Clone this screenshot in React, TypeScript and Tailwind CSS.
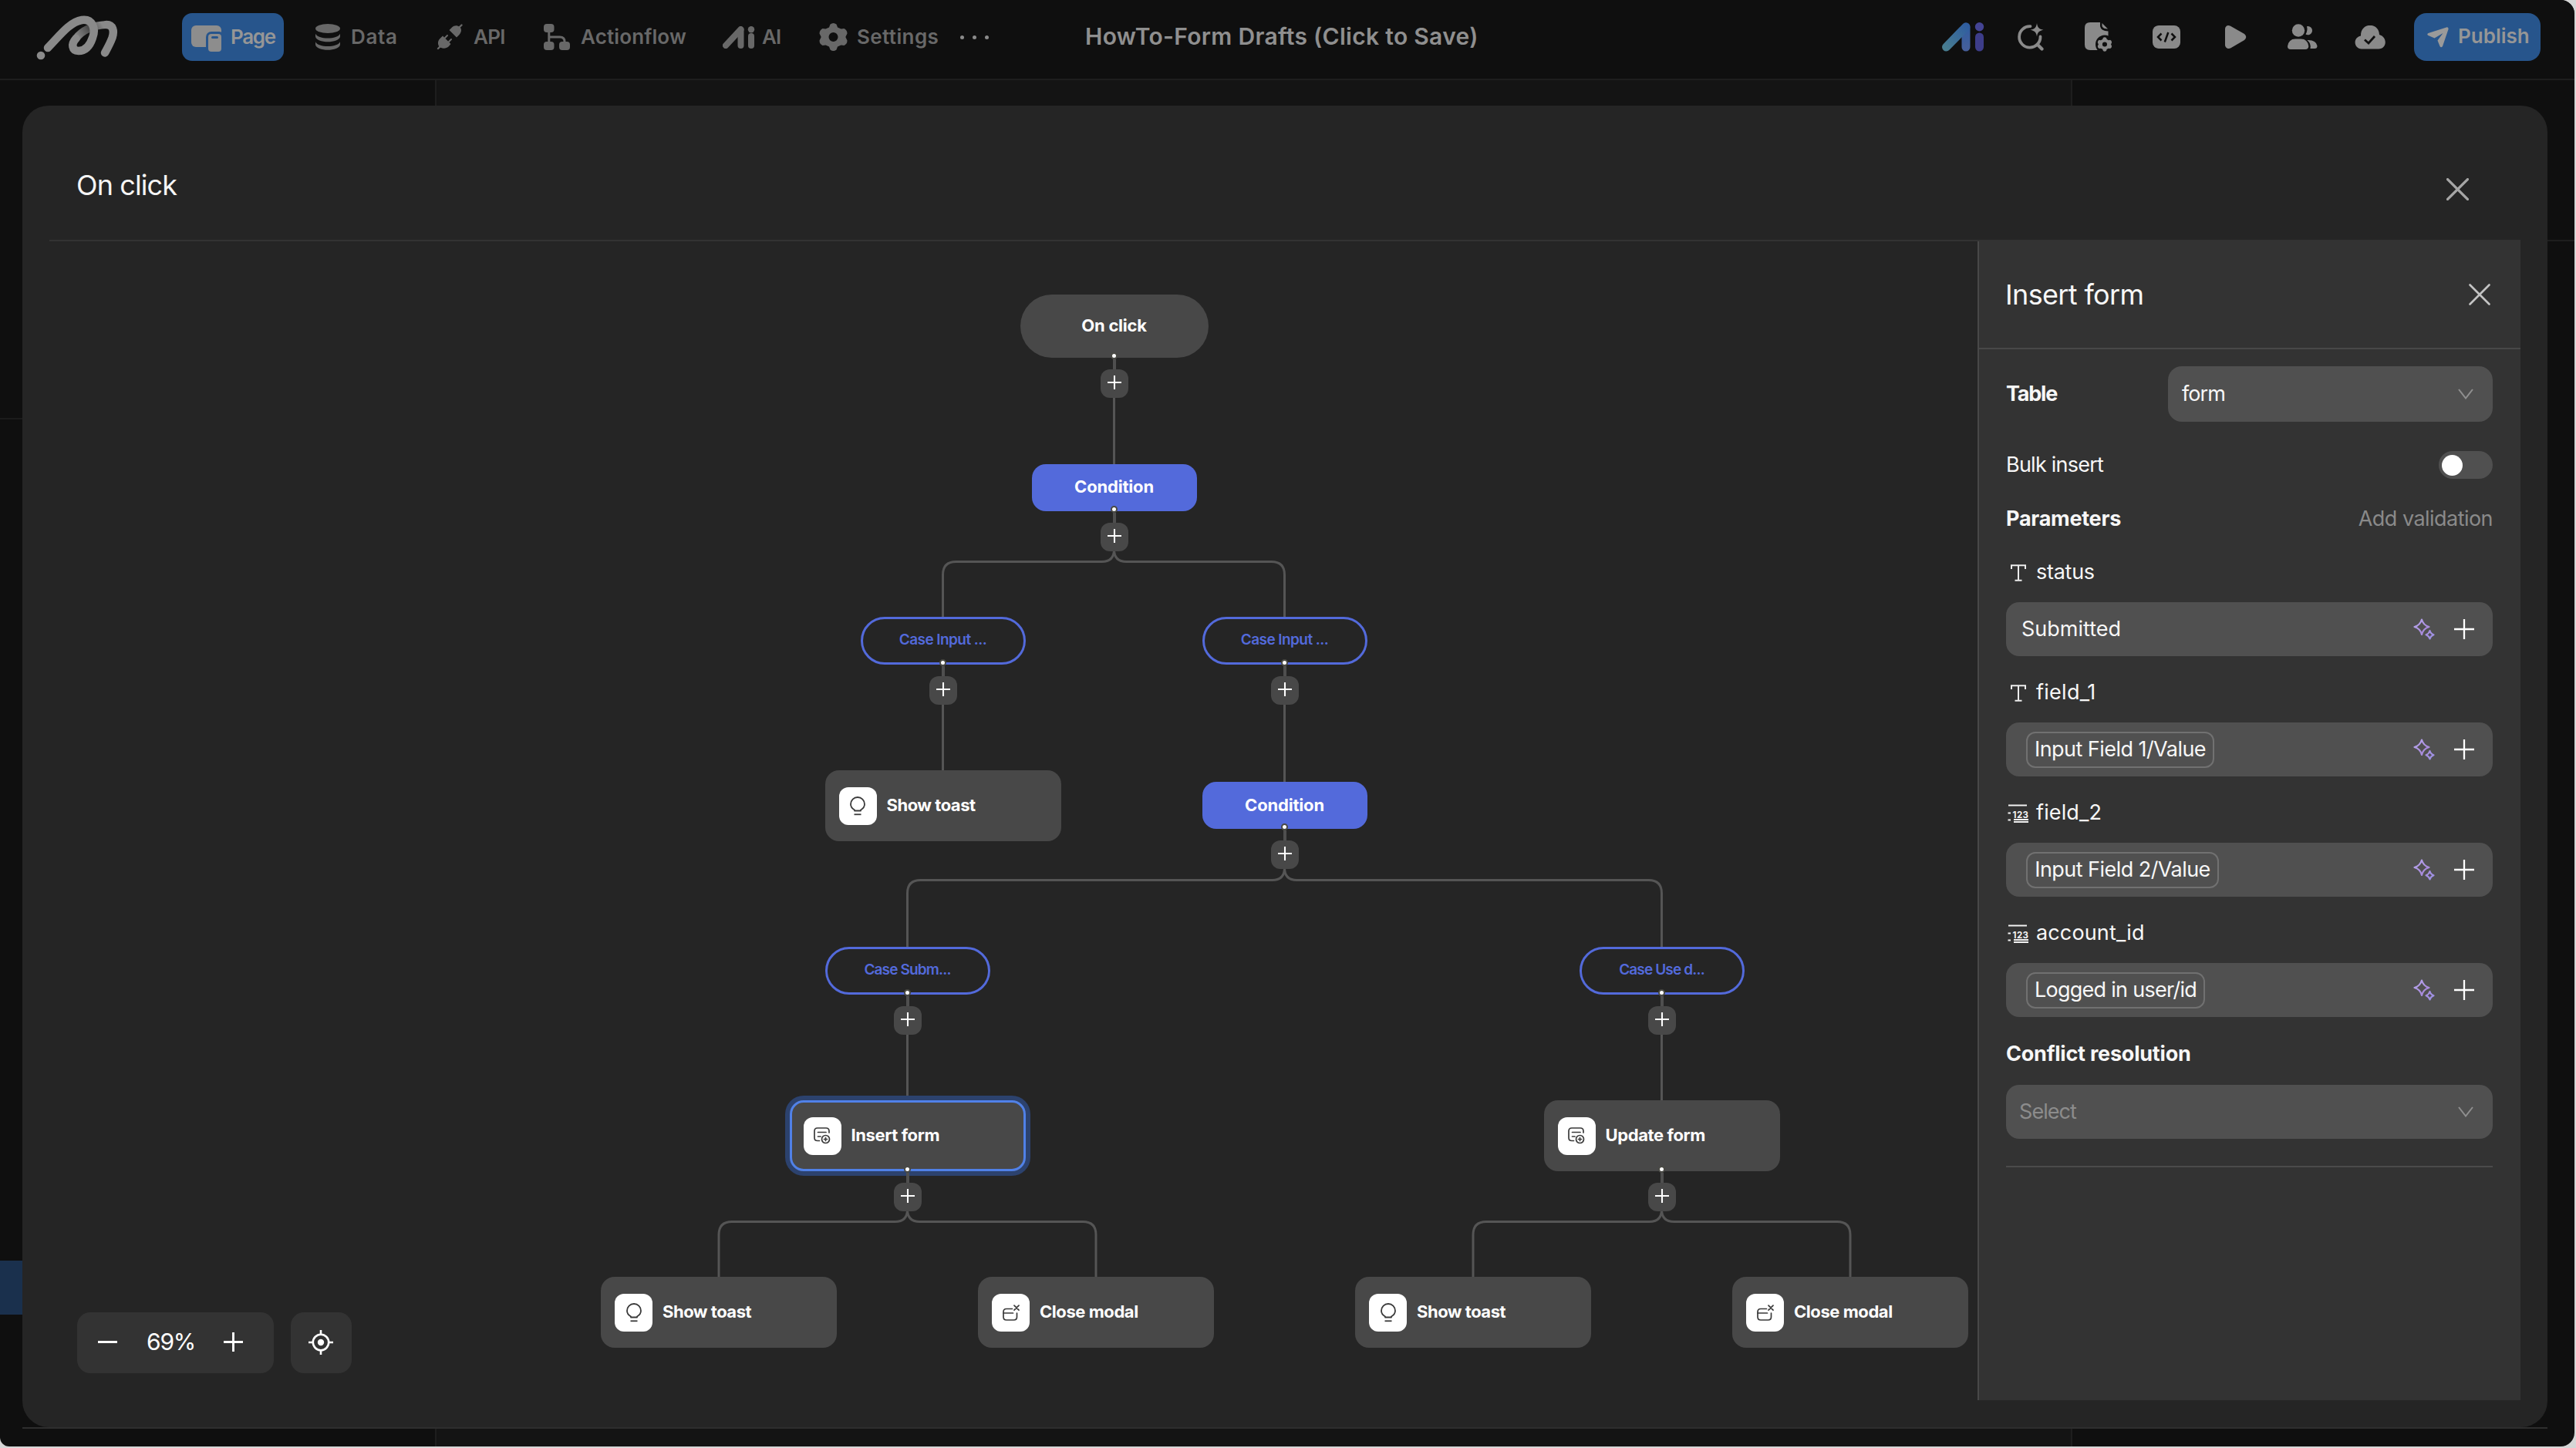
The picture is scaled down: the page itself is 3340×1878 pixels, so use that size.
import type { ReactNode } from "react";

/* ---------- Icons ---------- */

function LogoIcon() {
  return (
    <svg className="block h-[70px] w-[120px]" viewBox="40 12 120 70" fill="none" strokeLinecap="round" strokeLinejoin="round">
      <defs>
        <linearGradient id="fold" gradientUnits="userSpaceOnUse" x1="100" y1="50" x2="132" y2="30">
          <stop offset="0" stopColor="#8a8a8a" />
          <stop offset="0.55" stopColor="#4a4a4a" />
          <stop offset="1" stopColor="#8a8a8a" />
        </linearGradient>
      </defs>
      <path d="M98.5 49 C106 39 120 32 138 31" stroke="url(#fold)" strokeWidth="10" />
      <path d="M138 31 C146.500 31 148.500 39 145.500 48 C142.500 56 139 62 136 67.500" stroke="#8a8a8a" strokeWidth="10.500" />
      <path d="M62 61 C76 47 90 27.500 106 25 C120 23 124.500 36 120 48 C116 60 110 65 102 65 C93 64.500 92 56 98.500 49" stroke="#8a8a8a" strokeWidth="10.500" />
      <circle cx="53" cy="71" r="5.300" fill="#8a8a8a" />
    </svg>
  );
}

function PageIcon() {
  return (
    <svg className="block h-[34px] w-[39px] shrink-0" viewBox="0 0 39 34">
      <rect x="0" y="0" width="39" height="28" rx="6" fill="#8d8d8d" />
      <rect x="19" y="8" width="24" height="30" rx="7" fill="#27558c" />
      <rect x="22" y="11" width="17" height="23" rx="4" fill="#8d8d8d" />
      <rect x="26" y="14" width="9" height="3" rx="1.500" fill="#27558c" />
    </svg>
  );
}

function DataIcon() {
  return (
    <svg className="block h-[34px] w-[32px]" viewBox="0 0 32 34" fill="#686868">
      <ellipse cx="16" cy="6" rx="16" ry="6" />
      <path d="M0 11 C3 20 29 20 32 11 V15 C31 26 1 26 0 15 Z" transform="translate(0 3.500) scale(1 0.850)" />
      <path d="M0 11 C3 20 29 20 32 11 V15 C31 26 1 26 0 15 Z" transform="translate(0 14) scale(1 0.850)" />
    </svg>
  );
}

function ApiIcon() {
  return (
    <svg className="block h-[34px] w-[34px]" viewBox="0 0 34 34" fill="#686868" stroke="#686868" strokeLinecap="round" strokeWidth="2.400">
      <path d="M2 32 L7 27 M32.500 1.500 L28 6" />
      <path d="M11 18 L14 15 M16 23 L19 20" strokeWidth="2" />
      <path stroke="none" d="M8 15.500 L18.500 26 L16 29 C12 33 6 32 3.500 29.500 C1 26 1.500 21.500 5 18.500 Z" />
      <path stroke="none" d="M16.500 8 L26 17.500 L29.500 14 C33 10 32.500 6 30 4 C27 1.500 23 1.500 20 4.500 Z" />
    </svg>
  );
}

function FlowIcon() {
  return (
    <svg className="block h-[34px] w-[34px]" viewBox="0 0 34 34" fill="#686868">
      <rect x="0" y="0" width="13.500" height="11" rx="4" />
      <rect x="0" y="23" width="13.500" height="11" rx="4" />
      <rect x="20" y="23" width="14" height="11" rx="4" />
      <path d="M6.800 9 V25 M6.800 17 H21 Q27 17 27 23 V25" fill="none" stroke="#686868" strokeWidth="3" />
    </svg>
  );
}

function AiIcon() {
  return (
    <svg className="block h-[29px] w-[42px]" viewBox="0 0 42 29" stroke="#686868" fill="none" strokeLinecap="round">
      <path d="M4 25 L23.500 4" strokeWidth="8" />
      <path d="M23.500 5 V25" strokeWidth="8" />
      <path d="M37 13 V25" strokeWidth="8" />
      <circle cx="37" cy="4.200" r="4.200" fill="#686868" stroke="none" />
    </svg>
  );
}

function AiColorIcon() {
  return (
    <svg className="block h-[38px] w-[55px]" viewBox="0 0 55 38" fill="none" strokeLinecap="round">
      <defs>
        <linearGradient id="aiSlash" gradientUnits="userSpaceOnUse" x1="4" y1="34" x2="33" y2="4">
          <stop offset="0" stopColor="#487d90" />
          <stop offset="1" stopColor="#2f5da0" />
        </linearGradient>
        <linearGradient id="aiStem" gradientUnits="userSpaceOnUse" x1="31" y1="4" x2="31" y2="36">
          <stop offset="0" stopColor="#2f5da0" />
          <stop offset="1" stopColor="#465f9a" />
        </linearGradient>
      </defs>
      <rect x="25.500" y="1.500" width="11" height="36" rx="5.500" fill="url(#aiStem)" />
      <path d="M5.500 32 L31 5.800" stroke="url(#aiSlash)" strokeWidth="11" />
      <path d="M48.500 19 V32" stroke="#3d3d8a" strokeWidth="11" />
      <circle cx="48.500" cy="5.700" r="5.700" fill="#444494" />
    </svg>
  );
}

const GEAR =
  "M14.500 1.500 Q18.500 -1.500 22.500 1.500 L24 5.500 L28.500 7.500 L32.500 7 Q36.500 9 36.500 13.500 L34.500 17.500 L34.500 18.500 L36.500 22.500 Q36.500 27 32.500 29 L28.500 28.500 L24 30.500 L22.500 34.500 Q18.500 37.500 14.500 34.500 L13 30.500 L8.500 28.500 L4.500 29 Q0.500 27 0.500 22.500 L2.500 18.500 L2.500 17.500 L0.500 13.500 Q0.500 9 4.500 7 L8.500 7.500 L13 5.500 Z M18.500 12 A6 6 0 1 0 18.500 24 A6 6 0 1 0 18.500 12 Z";

function GearIcon() {
  return (
    <svg className="block h-[36px] w-[37px]" viewBox="0 0 37 36" fill="#686868" fillRule="evenodd">
      <path d={GEAR} />
    </svg>
  );
}

function SearchSparkIcon() {
  return (
    <svg className="block h-[36px] w-[36px]" viewBox="0 0 36 36" fill="none" stroke="#8a8a8a" strokeWidth="3.800" strokeLinecap="round">
      <path d="M17.500 4.200 A13.700 13.700 0 1 0 30.500 17.500" />
      <path d="M27 28 L32.500 33.500" strokeWidth="4.200" />
      <path d="M26 0 C26.900 5.600 28.400 7.500 34.500 8.800 C28.400 10.100 26.900 12 26 17.500 C25.100 12 23.600 10.100 17.500 8.800 C23.600 7.500 25.100 5.600 26 0 Z" fill="#8a8a8a" stroke="none" />
    </svg>
  );
}

function FileGearIcon() {
  return (
    <svg className="block h-[38px] w-[36px]" viewBox="0 0 36 38">
      <path d="M7 0 H20 V5 Q21 11 30.500 11.500 V36 H7 Q0 36 0 29 V7 Q0 0 7 0 Z" fill="#8a8a8a" />
      <path d="M22.500 1 L30 8.500 Q24 8.500 22.500 5 Z" fill="#8a8a8a" />
      <circle cx="26" cy="28.500" r="12" fill="#0f0f0f" />
      <g transform="translate(16.500 19.300) scale(0.510)">
        <path d={GEAR} fill="#8a8a8a" fillRule="evenodd" />
      </g>
    </svg>
  );
}

function CodeIcon() {
  return (
    <svg className="block h-[30px] w-[36px]" viewBox="0 0 36 30">
      <rect width="36" height="30" rx="8" fill="#8a8a8a" />
      <path d="M11.500 10.500 L7 15 L11.500 19.500 M24.500 10.500 L29 15 L24.500 19.500 M20.300 9 L15.800 21.500" fill="none" stroke="#0f0f0f" strokeWidth="2.500" />
    </svg>
  );
}

function PlayIcon() {
  return (
    <svg className="ml-[4px] block h-[30px] w-[28px]" viewBox="0 0 28 30">
      <path d="M0 4 Q1.500 -1.500 7 0.800 L25 11 Q29.500 15 25 19 L7 29.500 Q1.500 31.500 0 26 Z" fill="#8a8a8a" />
    </svg>
  );
}

function UsersIcon() {
  return (
    <svg className="block h-[34px] w-[39px]" viewBox="0 0 39 34" fill="#8a8a8a">
      <circle cx="14" cy="8.500" r="8.200" />
      <path d="M25 3.300 A5.600 5.600 0 1 1 23.500 13.500 Q26.500 8.500 25 3.300 Z" />
      <path d="M0 29 Q1.500 19.500 10 19.500 H17.500 Q26 19.500 27.300 29 Q27 33 23 33 H4 Q0 33 0 29 Z" />
      <path d="M25.500 21 Q37 20.500 38.500 28.500 Q38.500 32 35 32 H29.500 Q31 26 25.500 21 Z" />
    </svg>
  );
}

function CloudIcon() {
  return (
    <svg className="block h-[31px] w-[40px]" viewBox="0 0 40 31">
      <path d="M9 30.500 C-1 30.500 -3 16 8 13.500 C7.500 -4.500 31.500 -4.500 32 12 C43 15 42 30.500 31 30.500 Z" fill="#8a8a8a" />
      <path d="M13 18.500 L18 23 L26 14" fill="none" stroke="#0f0f0f" strokeWidth="2.800" />
    </svg>
  );
}

function SendIcon() {
  return (
    <svg className="block h-[27px] w-[28px] shrink-0" viewBox="0 0 28 27">
      <path d="M1.500 8 L25 0.400 Q28 0 27.500 3 L20 25 Q18 27.500 16.500 25 L13.500 17.500 L20.500 8 L9.500 14.500 L1.500 11 Q-1 9.500 1.500 8 Z" fill="#9a9a9a" />
    </svg>
  );
}

function CloseIcon({ className }: { className: string }) {
  return (
    <svg className={className} viewBox="0 0 28 28" fill="none" stroke="currentColor" strokeLinecap="round">
      <path d="M1.500 1.500 L26.500 26.500 M26.500 1.500 L1.500 26.500" />
    </svg>
  );
}

function ChevronIcon() {
  return (
    <svg className="block h-[14px] w-[20px]" viewBox="0 0 20 14" fill="none" stroke="#8f8f8f" strokeWidth="2">
      <path d="M1 1 L10 12.500 L19 1" />
    </svg>
  );
}

function SparklesIcon() {
  return (
    <svg className="block h-[28px] w-[28px]" viewBox="0 0 28 28" fill="none" strokeWidth="2.200" strokeLinejoin="round">
      <defs>
        <linearGradient id="spark" gradientUnits="userSpaceOnUse" x1="2" y1="0" x2="28" y2="28">
          <stop offset="0" stopColor="#b9aaf0" />
          <stop offset="0.500" stopColor="#a98bdc" />
          <stop offset="1" stopColor="#9a94e6" />
        </linearGradient>
      </defs>
      <path d="M11 1.500 Q13 9 20.500 11 Q13 13 11 21 Q9 13 1.500 11 Q9 9 11 1.500 Z" stroke="url(#spark)" />
      <path d="M21.500 16 Q22.500 20 26.500 21.200 Q22.500 22.500 21.500 26.500 Q20.300 22.500 16.500 21.200 Q20.300 20 21.500 16 Z" stroke="url(#spark)" />
    </svg>
  );
}

function PlusIcon({ className }: { className: string }) {
  return (
    <svg className={className} viewBox="0 0 26 26" fill="none" stroke="#ffffff">
      <path d="M13 0 V26 M0 13 H26" />
    </svg>
  );
}

function TextTypeIcon() {
  return (
    <svg className="block h-[22px] w-[20px]" viewBox="0 0 20 22" fill="none" stroke="#ececec" strokeWidth="2">
      <path d="M1 6 V1.200 H19 V6 M10 1.200 V20.800 M5.500 20.800 H14.500" />
    </svg>
  );
}

function NumberTypeIcon() {
  return (
    <svg className="block h-[24px] w-[28px]" viewBox="0 0 28 24" fill="none" stroke="#f2f2f2" strokeWidth="2">
      <path d="M1 1.500 H25 M0.500 11.500 H4 M0.500 20.500 H4 M8 20 H27 M8 23 H27" strokeWidth="1.800" />
      <text x="6.500" y="18" fontSize="11.500" fontWeight="700" fill="#f2f2f2" stroke="none" textLength="20.500">
        123
      </text>
    </svg>
  );
}

function BulbIcon() {
  return (
    <svg className="block h-[25px] w-[20px]" viewBox="0 0 20 25" fill="none" stroke="#3a3a3a" strokeWidth="1.800">
      <path d="M6 18.500 V17.500 C2.500 15.500 1 13 1 10 A9 9 0 0 1 19 10 C19 13 17.500 15.500 14 17.500 V18.500 Z" strokeLinejoin="round" />
      <path d="M5.500 23.300 H14.500" strokeWidth="1.800" />
    </svg>
  );
}

function FormAddIcon() {
  return (
    <svg className="block h-[22px] w-[22px]" viewBox="0 0 22 22" fill="none" stroke="#3a3a3a" strokeWidth="1.700" strokeLinecap="round">
      <path d="M7.500 17.500 H5 Q1 17.500 1 13.500 V5 Q1 1 5 1 H16 Q20 1 20 5 V7" />
      <path d="M5.500 6.500 H16 M5.500 12 H9" />
      <circle cx="15.500" cy="15.500" r="5" />
      <path d="M15.500 13.500 V17.500 M13.500 15.500 H17.500" />
    </svg>
  );
}

function ModalCloseIcon() {
  return (
    <svg className="block h-[21px] w-[22px]" viewBox="0 0 22 21" fill="none" stroke="#3a3a3a" strokeWidth="1.700" strokeLinecap="round">
      <path d="M12.500 5.500 H5 Q1 5.500 1 9.500 V16 Q1 20 5 20 H14.500 Q18.500 20 18.500 16 V11" />
      <path d="M1 11 H13.500" />
      <path d="M15 1.200 L21 7.200 M21 1.200 L15 7.200" />
    </svg>
  );
}

function LocateIcon() {
  return (
    <svg className="block h-[32px] w-[32px]" viewBox="0 0 32 32" fill="none" stroke="#ffffff" strokeWidth="2.600">
      <circle cx="16" cy="16" r="10.200" />
      <circle cx="16" cy="16" r="4.200" fill="#ffffff" stroke="none" />
      <path d="M16 0 V6 M16 26 V32 M0 16 H6 M26 16 H32" />
    </svg>
  );
}

/* ---------- Header ---------- */

function NavItem({ width, gap, icon, label, className }: { width: string; gap: string; icon: ReactNode; label: string; className?: string }) {
  return (
    <div className={`flex shrink-0 items-center ${width} ${gap}`}>
      {icon}
      <span className={`mt-[-2px] ${className}`}>{label}</span>
    </div>
  );
}

function Tool({ children }: { children: ReactNode }) {
  return <div className="flex w-[88px] shrink-0 items-center justify-center">{children}</div>;
}

function Header() {
  return (
    <header className="flex h-[104px] shrink-0 border-b-2 border-[#1e1e1e] bg-[#0f0f0f] pr-[44px] pl-[40px] text-[26px] font-semibold whitespace-nowrap text-[#686868]">
      <div className="flex h-[96px] flex-1 items-center">
        <div className="w-[196px] shrink-0">
          <LogoIcon />
        </div>
        <div className="mr-[41px] flex h-[62px] w-[132px] shrink-0 items-center gap-[12px] rounded-[13px] bg-[#27558c] pt-[3px] pl-[12px] text-[#969696]">
          <PageIcon />
          <span className="mt-[-5px] tracking-[-0.05em]">Page</span>
        </div>
        <NavItem width="w-[157px]" gap="gap-[14px]" icon={<DataIcon />} label="Data" className="tracking-[0.025em]" />
        <NavItem width="w-[139px]" gap="gap-[14px]" icon={<ApiIcon />} label="API" className="tracking-[-0.03em]" />
        <NavItem width="w-[232px]" gap="gap-[14px]" icon={<FlowIcon />} label="Actionflow" className="tracking-[0.005em]" />
        <NavItem width="w-[125px]" gap="gap-[9px]" icon={<AiIcon />} label="AI" className="tracking-[-0.04em]" />
        <NavItem width="w-[183px]" gap="gap-[12px]" icon={<GearIcon />} label="Settings" className="tracking-[0.015em]" />
        <div className="flex w-[162px] shrink-0 gap-[11px]">
          <span className="size-[5px] rounded-full bg-[#8a8a8a]" />
          <span className="size-[5px] rounded-full bg-[#8a8a8a]" />
          <span className="size-[5px] rounded-full bg-[#8a8a8a]" />
        </div>
        <h1 className="mt-[-1px] text-[30px] font-semibold tracking-[0.010em] text-[#8f8f8f]">HowTo-Form Drafts (Click to Save)</h1>
      </div>
      <div className="flex h-[96px] items-center">
        <Tool><AiColorIcon /></Tool>
        <Tool><SearchSparkIcon /></Tool>
        <Tool><FileGearIcon /></Tool>
        <Tool><CodeIcon /></Tool>
        <Tool><PlayIcon /></Tool>
        <Tool><UsersIcon /></Tool>
        <Tool><CloudIcon /></Tool>
        <div className="ml-[13px] flex h-[62px] w-[164px] items-center gap-[12px] rounded-[16px] bg-[#27558c] pl-[17px] text-[#969696]">
          <SendIcon />
          <span className="mt-[-3px] tracking-[0em]">Publish</span>
        </div>
      </div>
    </header>
  );
}

/* ---------- Flow canvas ---------- */

const ORIGIN_X = 64;
const ORIGIN_Y = 313;

type Kind = "start" | "condition" | "case" | "action";
type FlowNode = { kind: Kind; cx: number; y: number; label: string; track: string; icon?: ReactNode; selected?: boolean; out?: boolean };

const SIZE: Record<Kind, { w: number; h: number }> = {
  start: { w: 244, h: 82 },
  condition: { w: 214, h: 61 },
  case: { w: 214, h: 62 },
  action: { w: 306, h: 92 },
};

const NODES: FlowNode[] = [
  { kind: "start", cx: 1444.5, y: 382, label: "On click", track: "tracking-[-0.012em]", out: true },
  { kind: "condition", cx: 1444.5, y: 601.5, label: "Condition", track: "tracking-[-0.008em]", out: true },
  { kind: "case", cx: 1222.5, y: 800, label: "Case Input ...", track: "tracking-[-0.030em]", out: true },
  { kind: "case", cx: 1665.5, y: 800, label: "Case Input ...", track: "tracking-[-0.030em]", out: true },
  { kind: "action", cx: 1222.5, y: 999, label: "Show toast", track: "tracking-[-0.022em]", icon: <BulbIcon /> },
  { kind: "condition", cx: 1665.5, y: 1014, label: "Condition", track: "tracking-[-0.008em]", out: true },
  { kind: "case", cx: 1176.5, y: 1228, label: "Case Subm...", track: "tracking-[-0.045em]", out: true },
  { kind: "case", cx: 2154.5, y: 1228, label: "Case Use d...", track: "tracking-[-0.045em]", out: true },
  { kind: "action", cx: 1176.5, y: 1427, label: "Insert form", track: "tracking-[-0.018em]", icon: <FormAddIcon />, selected: true, out: true },
  { kind: "action", cx: 2154.5, y: 1427, label: "Update form", track: "tracking-[-0.018em]", icon: <FormAddIcon />, out: true },
  { kind: "action", cx: 932, y: 1656, label: "Show toast", track: "tracking-[-0.022em]", icon: <BulbIcon /> },
  { kind: "action", cx: 1421, y: 1656, label: "Close modal", track: "tracking-[-0.020em]", icon: <ModalCloseIcon /> },
  { kind: "action", cx: 1910, y: 1656, label: "Show toast", track: "tracking-[-0.022em]", icon: <BulbIcon /> },
  { kind: "action", cx: 2399, y: 1656, label: "Close modal", track: "tracking-[-0.020em]", icon: <ModalCloseIcon /> },
];

const branch = (cx: number, top: number, rail: number, ends: [number, number], bottom: number) => {
  const [l, r] = ends;
  return (
    `M${cx} ${top} V${rail - 16} Q${cx} ${rail} ${cx - 16} ${rail} H${l + 17} Q${l} ${rail} ${l} ${rail + 17} V${bottom} ` +
    `M${cx} ${rail - 16} Q${cx} ${rail} ${cx + 16} ${rail} H${r - 17} Q${r} ${rail} ${r} ${rail + 17} V${bottom}`
  );
};

const EDGES = [
  "M1444.5 462 V602",
  branch(1444.5, 661, 728.5, [1222.5, 1665.5], 800),
  "M1222.5 860 V1000",
  "M1665.5 860 V1015",
  branch(1665.5, 1073, 1141.5, [1176.5, 2154.5], 1229),
  "M1176.5 1288 V1427",
  "M2154.5 1288 V1427",
  branch(1176.5, 1518, 1584.5, [932, 1421], 1656),
  branch(2154.5, 1518, 1584.5, [1910, 2399], 1656),
];

const KIND_CLASS: Record<Kind, string> = {
  start: "justify-center rounded-full bg-[#484848] pb-[1px] text-[22px] font-bold text-white",
  condition: "justify-center rounded-[18px] bg-[#536adb] pb-[1px] text-[22px] font-bold text-white",
  case: "justify-center rounded-full border-3 border-[#536adb] bg-[#252525] pb-[1px] text-[19px] font-semibold text-[#536adb]",
  action: "gap-[13px] rounded-[18px] bg-[#484848] pl-[18px] text-[22px] font-bold text-white",
};

function NodeView({ node }: { node: FlowNode }) {
  const { w, h } = SIZE[node.kind];
  const ring = node.selected ? "ring-6 ring-[#2c426e] outline-3 -outline-offset-3 outline-[#5081e8]" : "";
  return (
    <>
      <div
        className={`absolute flex items-center whitespace-nowrap ${KIND_CLASS[node.kind]} ${ring} ${node.track}`}
        style={{ left: node.cx - w / 2 - ORIGIN_X, top: node.y - ORIGIN_Y, width: w, height: h }}
      >
        {node.icon && <span className="flex size-[49px] shrink-0 items-center justify-center rounded-[12px] bg-white">{node.icon}</span>}
        <span className={node.icon ? "mt-[-2px]" : ""}>{node.label}</span>
      </div>
      {node.out && (
        <div
          className="absolute flex w-[36px] flex-col items-center"
          style={{ left: node.cx - 18 - ORIGIN_X, top: node.y + h - 7 - ORIGIN_Y }}
        >
          <span className="size-[9px] rounded-full border-2 border-[#4a4a45] bg-white" />
          <span className="h-[13px] w-[4px] bg-[#4f4f4f]" />
          <span className="flex h-[37px] w-[36px] items-center justify-center rounded-[12px] bg-[#484848] pb-[3px]">
            <PlusIcon className="block size-[18px] stroke-[3]" />
          </span>
        </div>
      )}
    </>
  );
}

function Canvas() {
  return (
    <div className="relative flex-1 overflow-hidden">
      <svg className="absolute inset-0 h-[1503px] w-[2500px]" viewBox="64 313 2500 1503" fill="none" stroke="#555555" strokeWidth="3">
        {EDGES.map((d) => (
          <path key={d} d={d} />
        ))}
      </svg>
      {NODES.map((n, i) => (
        <NodeView key={i} node={n} />
      ))}
      <div className="absolute bottom-[35px] left-[36px] flex gap-[22px]">
        <div className="flex h-[79px] w-[255px] items-center rounded-[17px] bg-[#333333] pb-[2px] pl-[27px]">
          <span className="h-[3px] w-[25px] bg-white" />
          <span className="ml-[38px] w-[100px] text-[30px] tracking-[-0.04em] text-white">69%</span>
          <PlusIcon className="block size-[25px] stroke-[3]" />
        </div>
        <div className="flex size-[79px] items-center justify-center rounded-[17px] bg-[#333333] pr-[2px] pb-[2px]">
          <LocateIcon />
        </div>
      </div>
    </div>
  );
}

/* ---------- Side panel ---------- */

function FieldLabel({ icon, label, track }: { icon: ReactNode; label: string; track: string }) {
  return (
    <div className="flex h-[36px] items-center">
      <span className="flex w-[39px] items-center pl-[2px]">{icon}</span>
      <span className={`mt-[-1px] ${track}`}>{label}</span>
    </div>
  );
}

function FieldInput({ children }: { children: ReactNode }) {
  return (
    <div className="mt-[20px] mb-[30px] flex h-[70px] items-center rounded-[17px] bg-[#505050] pr-[24px]">
      {children}
      <span className="ml-auto">
        <SparklesIcon />
      </span>
      <PlusIcon className="ml-[25px] block size-[26px] stroke-[2.3]" />
    </div>
  );
}

function Chip({ label, className }: { label: string; className: string }) {
  return (
    <span className={`ml-[26px] flex h-[47px] items-center justify-center rounded-[12px] border-2 border-[#717171] ${className}`}>{label}</span>
  );
}

function SidePanel() {
  return (
    <aside className="flex w-[704px] flex-col border-l-2 border-[#484848] bg-[#333333] text-[27px] whitespace-nowrap text-[#f7f7f7]">
      <div className="flex h-[140px] items-center justify-between border-b-2 border-[#484848] pr-[39px] pl-[34px]">
        <h2 className="text-[36px] tracking-[-0.018em]">Insert form</h2>
        <CloseIcon className="block size-[28px] stroke-[2.6] text-[#c4c4c4]" />
      </div>
      <div className="flex flex-col pt-[22px] pr-[36px] pl-[35px]">
        <div className="flex h-[72px] items-center justify-between">
          <span className="font-bold tracking-[-0.045em]">Table</span>
          <div className="flex h-[72px] w-[421px] items-center justify-between rounded-[18px] bg-[#505050] pr-[25px] pl-[18px]">
            <span className="tracking-[-0.035em]">form</span>
            <ChevronIcon />
          </div>
        </div>
        <div className="mt-[38px] flex h-[36px] items-center justify-between">
          <span className="tracking-[-0.028em]">Bulk insert</span>
          <span className="flex h-[36px] w-[70px] items-center rounded-full bg-[#505050] pl-[4px]">
            <span className="size-[27px] rounded-full bg-white" />
          </span>
        </div>
        <div className="mt-[34px] flex h-[36px] items-center justify-between">
          <span className="font-bold tracking-[-0.010em]">Parameters</span>
          <span className="tracking-[-0.020em] text-[#8a8a8a]">Add validation</span>
        </div>
        <div className="mt-[34px] flex flex-col">
          <FieldLabel icon={<span className="pl-[4px]"><TextTypeIcon /></span>} label="status" track="tracking-[-0.010em]" />
          <FieldInput>
            <span className="ml-[20px] tracking-[0em]">Submitted</span>
          </FieldInput>
          <FieldLabel icon={<span className="pl-[4px]"><TextTypeIcon /></span>} label="field_1" track="tracking-[0.01em]" />
          <FieldInput>
            <Chip label="Input Field 1/Value" className="w-[244px] tracking-[-0.020em]" />
          </FieldInput>
          <FieldLabel icon={<NumberTypeIcon />} label="field_2" track="tracking-[0.005em]" />
          <FieldInput>
            <Chip label="Input Field 2/Value" className="w-[250px] tracking-[-0.020em]" />
          </FieldInput>
          <FieldLabel icon={<NumberTypeIcon />} label="account_id" track="tracking-[0.005em]" />
          <FieldInput>
            <Chip label="Logged in user/id" className="w-[232px] tracking-[-0.027em]" />
          </FieldInput>
        </div>
        <span className="flex h-[36px] items-center font-bold tracking-[-0.008em]">Conflict resolution</span>
        <div className="mt-[22px] flex h-[70px] items-center justify-between rounded-[17px] bg-[#505050] pr-[25px] pl-[17px]">
          <span className="tracking-[-0.035em] text-[#8c8c8c]">Select</span>
          <ChevronIcon />
        </div>
        <div className="mt-[35px] h-[2px] bg-[#4b4b4b]" />
      </div>
    </aside>
  );
}

/* ---------- Page ---------- */

export default function App() {
  return (
    <div className="relative h-[1878px] w-[3340px] overflow-hidden bg-[#d6d6d6] font-['Inter',sans-serif]">
      <div className="relative flex h-[1876px] w-[3338px] flex-col overflow-hidden rounded-r-[18px] rounded-bl-[12px] bg-[#0f0f0f]">
        <Header />
        <div className="flex flex-1">
          <div className="flex w-[566px] flex-col border-r-2 border-[#1e1e1e]">
            <div className="h-[440px] border-b-2 border-[#1b1b1b]" />
            <div className="mt-[1091px] h-[70px] bg-[#1a304d]" />
          </div>
          <div className="w-[2119px] bg-[#141414]" />
          <div className="flex-1 border-l-2 border-[#1e1e1e]">
            <div className="h-[209px] border-b-2 border-[#1e1e1e]" />
          </div>
        </div>
        <div className="absolute top-[1851px] left-[29px] h-[2px] w-[3274px] bg-[#2e2e2e]" />
        <section className="absolute top-[137px] left-[29px] flex h-[1714px] w-[3274px] flex-col rounded-[34px] bg-[#252525] px-[35px] pb-[35px]">
          <div className="flex h-[176px] shrink-0 items-center justify-between border-b-2 border-[#333333] pr-[67px] pl-[35px]">
            <h2 className="mt-[31px] text-[36px] tracking-[-0.025em] text-[#f5f5f5]">On click</h2>
            <CloseIcon className="mt-[43px] block size-[29px] stroke-[3.2] text-[#a6a6a6]" />
          </div>
          <div className="flex flex-1">
            <Canvas />
            <SidePanel />
          </div>
        </section>
      </div>
    </div>
  );
}
